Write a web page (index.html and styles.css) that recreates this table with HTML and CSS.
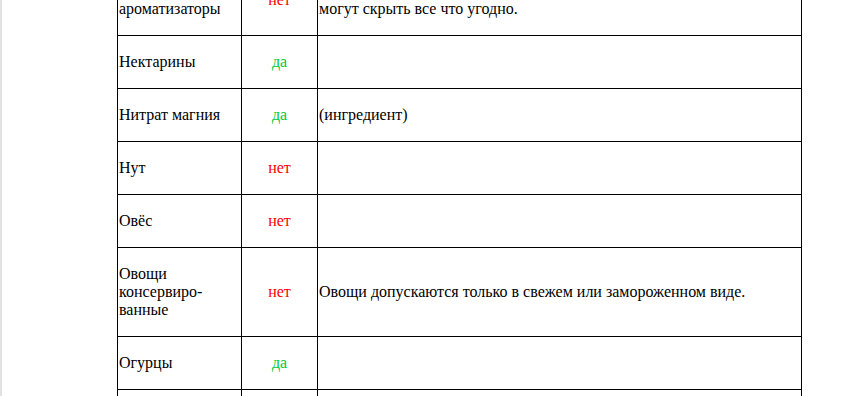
FILE: index.html
```html
<!DOCTYPE html>
<html lang="ru">
<head>
<meta charset="utf-8">
<title>Продукты</title>
<link rel="stylesheet" href="styles.css">
</head>
<body>
<div class="page">
  <table class="products">
    <colgroup>
      <col class="c-name">
      <col class="c-ok">
      <col class="c-note">
    </colgroup>
    <tbody>
      <tr>
        <td>Натуральные ароматизаторы</td>
        <td class="ok no">нет</td>
        <td>Под названием «натуральные ароматизаторы» производители<br>могут скрыть все что угодно.</td>
      </tr>
      <tr>
        <td>Нектарины</td>
        <td class="ok yes">да</td>
        <td></td>
      </tr>
      <tr>
        <td>Нитрат магния</td>
        <td class="ok yes">да</td>
        <td>(ингредиент)</td>
      </tr>
      <tr>
        <td>Нут</td>
        <td class="ok no">нет</td>
        <td></td>
      </tr>
      <tr>
        <td>Овёс</td>
        <td class="ok no">нет</td>
        <td></td>
      </tr>
      <tr>
        <td>Овощи<br>консервиро-<br>ванные</td>
        <td class="ok no">нет</td>
        <td>Овощи допускаются только в свежем или замороженном виде.</td>
      </tr>
      <tr>
        <td>Огурцы</td>
        <td class="ok yes">да</td>
        <td></td>
      </tr>
      <tr>
        <td>Оливки</td>
        <td class="ok yes">да</td>
        <td></td>
      </tr>
    </tbody>
  </table>
</div>
</body>
</html>
```

FILE: styles.css
```css
html, body {
  margin: 0;
  padding: 0;
  background: #fff;
}

body {
  font-family: "Liberation Serif", "Times New Roman", serif;
  font-size: 16px;
  line-height: 18px;
  color: #000;
  overflow: hidden;
}

.page {
  min-height: 396px;
  border-left: 2px solid #e2e2e2;
  padding-left: 115px;
}

.products {
  border-collapse: collapse;
  table-layout: fixed;
  width: 684px;
  margin-top: -36px;
}

.c-name { width: 124px; }
.c-ok { width: 76px; }
.c-note { width: 484px; }

.products td {
  border: 1px solid #000;
  padding: 17px 1px;
  vertical-align: middle;
  text-align: left;
}

.products td.ok {
  text-align: center;
}

.products td.no {
  color: #ff0000;
}

.products td.yes {
  color: #00c832;
}
```
